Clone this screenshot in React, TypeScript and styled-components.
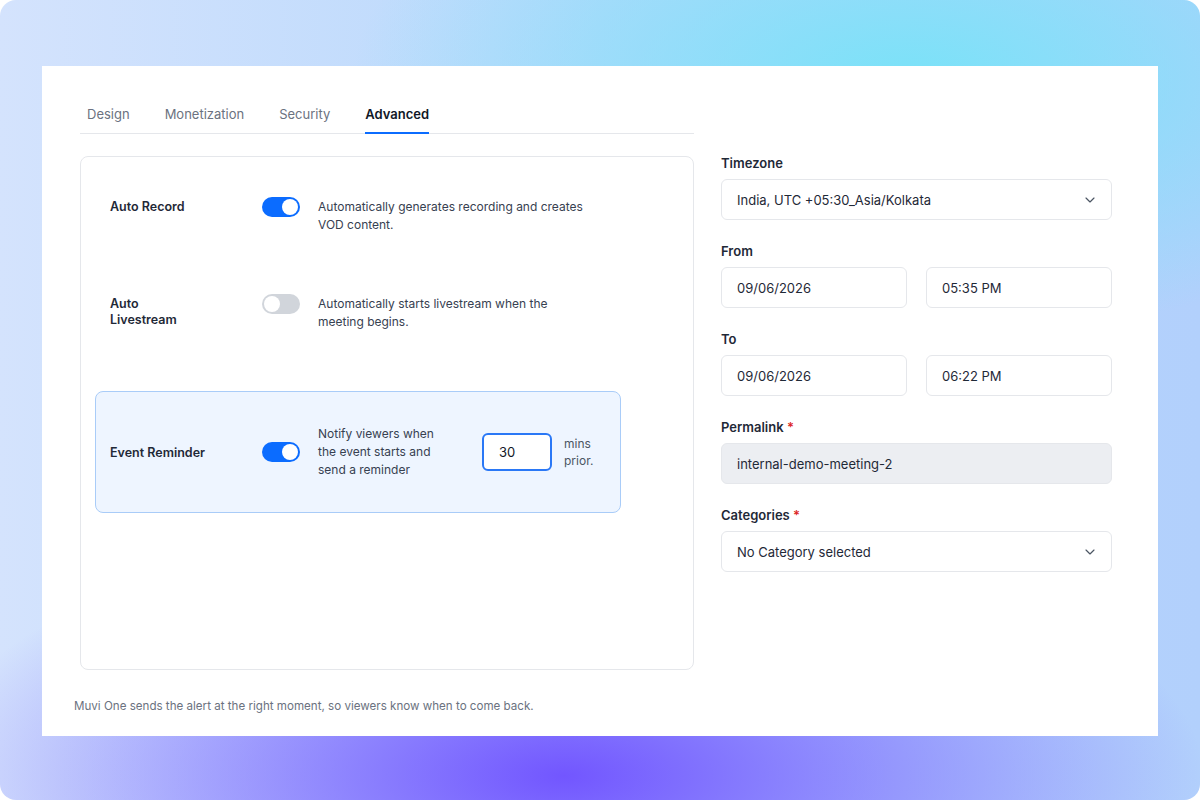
import styled, { createGlobalStyle } from "styled-components";
import { ChevronDown } from "lucide-react";

const GlobalStyle = createGlobalStyle`
    * {
        box-sizing: border-box;
    }
    body {
        margin: 0;
        background: #ffffff;
        font-family: Inter, "Noto Sans", "Liberation Sans", sans-serif;
    }
`;

const Frame = styled.div`
    width: 1200px;
    height: 800px;
    border-radius: 16px;
    overflow: hidden;
    padding: 66px 42px 0;
    background:
        radial-gradient(ellipse 560px 260px at 76% 10%, rgba(122, 226, 248, 1) 0%, rgba(122, 226, 248, 0) 100%),
        radial-gradient(ellipse 640px 260px at 47% 97%, rgba(114, 86, 255, 1) 0%, rgba(114, 86, 255, 0.55) 45%, rgba(114, 86, 255, 0) 100%),
        linear-gradient(90deg, #d4e3fd 0%, #b8d8fc 50%, #b2d0fc 100%);
`;

const Card = styled.div`
    height: 670px;
    background: #ffffff;
    padding: 38px 46px 0 32px;
    display: flex;
    flex-direction: column;
`;

const Main = styled.div`
    display: grid;
    grid-template-columns: 614px 391px;
    column-gap: 27px;
    padding-left: 6px;
`;

const LeftColumn = styled.div`
    display: flex;
    flex-direction: column;
`;

const TabBar = styled.div`
    display: flex;
    gap: 35px;
    padding-left: 7px;
    border-bottom: 1px solid #e5e7eb;
`;

const Tab = styled.div<{ $active?: boolean }>`
    font-size: 13px;
    line-height: 20px;
    padding-bottom: 8px;
    margin-bottom: -1px;
    border-bottom: 2px solid ${(p) => (p.$active ? "#0b6cff" : "transparent")};
    color: ${(p) => (p.$active ? "#111827" : "#6b7280")};
    font-weight: ${(p) => (p.$active ? 600 : 400)};
`;

const Panel = styled.div`
    margin-top: 22px;
    height: 514px;
    border: 1px solid #e5e7eb;
    border-radius: 8px;
    padding: 40px 14px;
    display: flex;
    flex-direction: column;
    gap: 60px;
`;

const SettingRow = styled.div<{ $highlight?: boolean }>`
    display: flex;
    width: 526px;
    align-items: ${(p) => (p.$highlight ? "center" : "flex-start")};
    padding: ${(p) => (p.$highlight ? "32px 14px 33px" : "0 15px")};
    background: ${(p) => (p.$highlight ? "#eef5ff" : "transparent")};
    border: ${(p) => (p.$highlight ? "1px solid #a9ccf8" : "none")};
    border-radius: 8px;
`;

const SettingLabel = styled.div`
    flex: 0 0 96px;
    margin-right: 56px;
    margin-top: 2px;
    font-size: 12.5px;
    line-height: 16px;
    font-weight: 600;
    color: #1f2937;
`;

const Toggle = styled.div<{ $on?: boolean }>`
    flex: 0 0 38px;
    height: 20px;
    border-radius: 10px;
    padding: 2px;
    display: flex;
    justify-content: ${(p) => (p.$on ? "flex-end" : "flex-start")};
    background: ${(p) => (p.$on ? "#0b6cff" : "#d1d5db")};

    &::after {
        content: "";
        width: 16px;
        height: 16px;
        border-radius: 50%;
        background: #ffffff;
    }
`;

const SettingDesc = styled.div<{ $width: number }>`
    width: ${(p) => p.$width}px;
    margin-left: 18px;
    margin-top: 1px;
    font-size: 12px;
    line-height: 18px;
    color: #374151;
`;

const MinutesInput = styled.div`
    width: 70px;
    height: 38px;
    margin-left: 38px;
    border: 2px solid #2a78f6;
    border-radius: 6px;
    background: #ffffff;
    padding-left: 15px;
    display: flex;
    align-items: center;
    font-size: 13px;
    color: #111827;
`;

const MinutesSuffix = styled.div`
    width: 34px;
    margin-left: 12px;
    font-size: 12px;
    line-height: 17px;
    color: #4b5563;
`;

const RightColumn = styled.div`
    padding-top: 49px;
    display: flex;
    flex-direction: column;
    gap: 21px;
`;

const Field = styled.div`
    display: flex;
    flex-direction: column;
    gap: 6px;
`;

const FieldLabel = styled.div`
    font-size: 13px;
    line-height: 20px;
    font-weight: 600;
    color: #1f2937;
`;

const Required = styled.span`
    color: #dc2626;
`;

const InputPair = styled.div`
    display: grid;
    grid-template-columns: 1fr 1fr;
    gap: 19px;
`;

const InputBox = styled.div<{ $disabled?: boolean }>`
    height: 41px;
    border: 1px solid #e5e7eb;
    border-radius: 6px;
    padding: 0 15px;
    display: flex;
    align-items: center;
    justify-content: space-between;
    font-size: 13px;
    color: #1f2937;
    background: ${(p) => (p.$disabled ? "#eceef2" : "#ffffff")};
`;

const Chevron = styled(ChevronDown)`
    color: #4b5563;
    margin-right: -2px;
`;

const FooterNote = styled.div`
    margin-top: 28px;
    font-size: 11.6px;
    line-height: 16px;
    color: #6b7280;
`;

export default function App() {
    return (
        <>
            <GlobalStyle />
            <Frame>
                <Card>
                    <Main>
                        <LeftColumn>
                            <TabBar>
                                <Tab>Design</Tab>
                                <Tab>Monetization</Tab>
                                <Tab>Security</Tab>
                                <Tab $active>Advanced</Tab>
                            </TabBar>
                            <Panel>
                                <SettingRow>
                                    <SettingLabel>Auto Record</SettingLabel>
                                    <Toggle $on />
                                    <SettingDesc $width={275}>
                                        Automatically generates recording and creates VOD content.
                                    </SettingDesc>
                                </SettingRow>
                                <SettingRow>
                                    <SettingLabel>Auto Livestream</SettingLabel>
                                    <Toggle />
                                    <SettingDesc $width={275}>
                                        Automatically starts livestream when the meeting begins.
                                    </SettingDesc>
                                </SettingRow>
                                <SettingRow $highlight>
                                    <SettingLabel>Event Reminder</SettingLabel>
                                    <Toggle $on />
                                    <SettingDesc $width={126}>
                                        Notify viewers when the event starts and send a reminder
                                    </SettingDesc>
                                    <MinutesInput>30</MinutesInput>
                                    <MinutesSuffix>mins prior.</MinutesSuffix>
                                </SettingRow>
                            </Panel>
                        </LeftColumn>
                        <RightColumn>
                            <Field>
                                <FieldLabel>Timezone</FieldLabel>
                                <InputBox>
                                    India, UTC +05:30_Asia/Kolkata
                                    <Chevron size={16} strokeWidth={1.75} />
                                </InputBox>
                            </Field>
                            <Field>
                                <FieldLabel>From</FieldLabel>
                                <InputPair>
                                    <InputBox>09/06/2026</InputBox>
                                    <InputBox>05:35 PM</InputBox>
                                </InputPair>
                            </Field>
                            <Field>
                                <FieldLabel>To</FieldLabel>
                                <InputPair>
                                    <InputBox>09/06/2026</InputBox>
                                    <InputBox>06:22 PM</InputBox>
                                </InputPair>
                            </Field>
                            <Field>
                                <FieldLabel>
                                    Permalink <Required>*</Required>
                                </FieldLabel>
                                <InputBox $disabled>internal-demo-meeting-2</InputBox>
                            </Field>
                            <Field>
                                <FieldLabel>
                                    Categories <Required>*</Required>
                                </FieldLabel>
                                <InputBox>
                                    No Category selected
                                    <Chevron size={16} strokeWidth={1.75} />
                                </InputBox>
                            </Field>
                        </RightColumn>
                    </Main>
                    <FooterNote>
                        Muvi One sends the alert at the right moment, so viewers know when to come back.
                    </FooterNote>
                </Card>
            </Frame>
        </>
    );
}
